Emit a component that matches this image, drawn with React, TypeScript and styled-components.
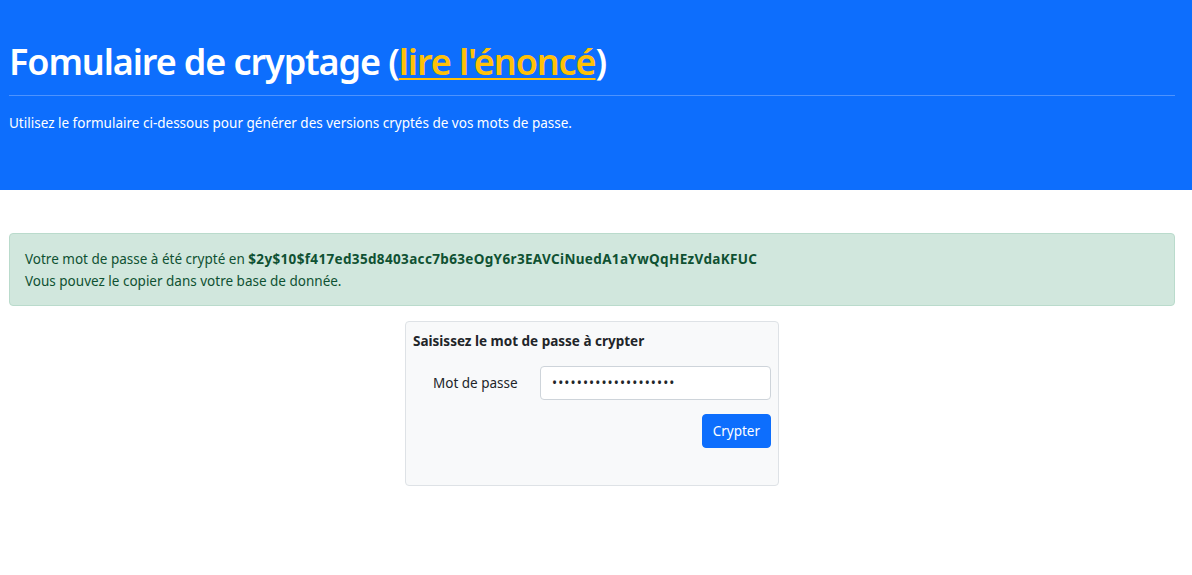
import styled, { createGlobalStyle } from "styled-components";

const GlobalStyle = createGlobalStyle`
  html, body {
    margin: 0;
    padding: 0;
    background: #fff;
  }
  body {
    font-family: "Segoe UI", "Noto Sans", Arial, sans-serif;
    font-size: 14px;
    line-height: 1.5;
    color: #212529;
  }
  * {
    box-sizing: border-box;
  }
`;

const Header = styled.header`
  background: #0d6efd;
  color: #fff;
  padding: 40px 17px 57px 9px;
`;

const Title = styled.h1`
  margin: 0;
  font-size: 36px;
  font-weight: 600;
  line-height: 1.2;
  letter-spacing: -1.1px;
`;

const TitleLink = styled.a`
  color: #ffc107;
  text-decoration: underline;
  text-decoration-thickness: 2px;
  text-underline-offset: 3px;
`;

const Rule = styled.hr`
  margin: 12px 0 17px;
  border: 0;
  border-top: 1px solid #4d93fe;
`;

const Lead = styled.p`
  margin: 0;
  font-size: 13.5px;
`;

const Main = styled.main`
  padding: 43px 17px 40px 9px;
  display: flex;
  flex-direction: column;
  align-items: center;
  gap: 15px;
`;

const Alert = styled.div`
  align-self: stretch;
  background: #d1e7dd;
  border: 1px solid #badbcc;
  border-radius: 4px;
  color: #0f5132;
  padding: 14px 15px 13px;
  font-size: 13.5px;
  line-height: 22px;
`;

const Hash = styled.strong`
  font-weight: 700;
  letter-spacing: 0.35px;
`;

const Card = styled.form`
  width: 374px;
  background: #f8f9fa;
  border: 1px solid #dee2e6;
  border-radius: 4px;
  padding: 9px 7px 37px;
`;

const CardTitle = styled.h2`
  margin: 0 0 14px;
  font-size: 13.5px;
  font-weight: 700;
  line-height: 21px;
`;

const FieldRow = styled.div`
  display: grid;
  grid-template-columns: 127px 1fr;
  align-items: center;
`;

const Label = styled.label`
  padding-left: 20px;
  font-size: 13.5px;
`;

const Input = styled.input`
  height: 34px;
  width: 100%;
  border: 1px solid #ced4da;
  border-radius: 4px;
  background: #fff;
  padding: 4px 11px;
  font-size: 13.5px;
  color: #212529;
  font-family: inherit;
  letter-spacing: 1.1px;
`;

const Actions = styled.div`
  display: flex;
  justify-content: flex-end;
  margin-top: 14px;
`;

const Button = styled.button`
  height: 34px;
  padding: 0 10px;
  background: #0d6efd;
  color: #fff;
  border: 1px solid #0d6efd;
  border-radius: 4px;
  font-family: inherit;
  font-size: 13.5px;
  cursor: pointer;
`;

export default function App() {
  return (
    <>
      <GlobalStyle />
      <Header>
        <Title>
          Fomulaire de cryptage (<TitleLink href="#">lire l'énoncé</TitleLink>)
        </Title>
        <Rule />
        <Lead>
          Utilisez le formulaire ci-dessous pour générer des versions cryptés de vos mots de passe.
        </Lead>
      </Header>
      <Main>
        <Alert>
          Votre mot de passe à été crypté en{" "}
          <Hash>$2y$10$f417ed35d8403acc7b63eOgY6r3EAVCiNuedA1aYwQqHEzVdaKFUC</Hash>
          <br />
          Vous pouvez le copier dans votre base de donnée.
        </Alert>
        <Card onSubmit={(e) => e.preventDefault()}>
          <CardTitle>Saisissez le mot de passe à crypter</CardTitle>
          <FieldRow>
            <Label htmlFor="pwd">Mot de passe</Label>
            <Input id="pwd" type="password" defaultValue="monmotdepasse1234567" />
          </FieldRow>
          <Actions>
            <Button type="submit">Crypter</Button>
          </Actions>
        </Card>
      </Main>
    </>
  );
}
